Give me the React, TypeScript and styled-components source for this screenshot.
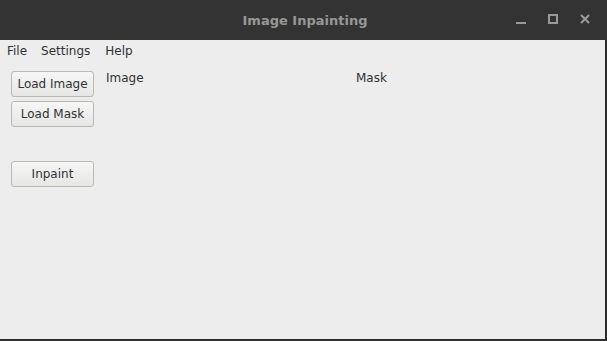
import React from 'react'
import styled, { createGlobalStyle } from 'styled-components'

const GlobalStyle = createGlobalStyle`
  html, body {
    margin: 0;
    padding: 0;
    background: #3a3a3a;
  }
  body {
    font-family: 'DejaVu Sans', 'Noto Sans', sans-serif;
  }
`

const Window = styled.div`
  width: 607px;
  height: 341px;
  display: flex;
  flex-direction: column;
  background: #333333;
`

const TitleBar = styled.div`
  height: 40px;
  flex-shrink: 0;
  display: flex;
  align-items: center;
  position: relative;
  background: #333333;
`

const Title = styled.div`
  flex: 1;
  text-align: center;
  padding-left: 3px;
  font-size: 13px;
  font-weight: bold;
  color: #979797;
`

const Controls = styled.div`
  position: absolute;
  right: 17px;
  top: 14px;
  display: flex;
  align-items: center;
  gap: 22px;
`

const Body = styled.div`
  flex: 1;
  display: flex;
  flex-direction: column;
  background: #ededed;
  border-right: 2px solid #2b2b2b;
  border-bottom: 1px solid #2b2b2b;
  margin-bottom: 1px;
  color: #2e3436;
  font-size: 12px;
`

const MenuBar = styled.div`
  height: 20px;
  display: flex;
  align-items: center;
  padding: 1px 0 0 7px;
  box-sizing: border-box;
`

const MenuItem = styled.span`
  margin-right: 14px;
  font-size: 12px;
  color: #2e3436;

  &:nth-child(2) {
    margin-right: 15px;
  }
`

const Content = styled.div`
  flex: 1;
  display: flex;
  padding: 11px 0 0 11px;
`

const SidePanel = styled.div`
  width: 83px;
  display: flex;
  flex-direction: column;
  gap: 4px;
`

const Button = styled.button<{ $gapTop?: number }>`
  width: 83px;
  height: 26px;
  margin-top: ${p => p.$gapTop ?? 0}px;
  padding: 0;
  border: 1px solid #b8b8b4;
  border-radius: 3px;
  background: linear-gradient(#f6f6f5, #e6e6e4);
  font-family: 'DejaVu Sans', sans-serif;
  font-size: 12px;
  color: #2e3436;
`

const Label = styled.div<{ $width: number }>`
  width: ${p => p.$width}px;
`

export default function App() {
  return (
    <>
      <GlobalStyle />
      <Window>
        <TitleBar>
          <Title>Image Inpainting</Title>
          <Controls>
            <svg width="10" height="12" viewBox="0 0 10 12">
              <rect x="0" y="8" width="10" height="2" fill="#9a9a9a" />
            </svg>
            <svg width="10" height="12" viewBox="0 0 10 12">
              <rect x="1" y="1" width="8" height="8" fill="none" stroke="#9a9a9a" strokeWidth="2" />
            </svg>
            <svg width="10" height="12" viewBox="0 0 10 12">
              <path d="M1 1 L9 9 M9 1 L1 9" stroke="#9a9a9a" strokeWidth="2" />
            </svg>
          </Controls>
        </TitleBar>
        <Body>
          <MenuBar>
            <MenuItem>File</MenuItem>
            <MenuItem>Settings</MenuItem>
            <MenuItem>Help</MenuItem>
          </MenuBar>
          <Content>
            <SidePanel>
              <Button>Load Image</Button>
              <Button>Load Mask</Button>
              <Button $gapTop={30}>Inpaint</Button>
            </SidePanel>
            <Label $width={250} style={{ marginLeft: 12 }}>Image</Label>
            <Label $width={100}>Mask</Label>
          </Content>
        </Body>
      </Window>
    </>
  )
}
